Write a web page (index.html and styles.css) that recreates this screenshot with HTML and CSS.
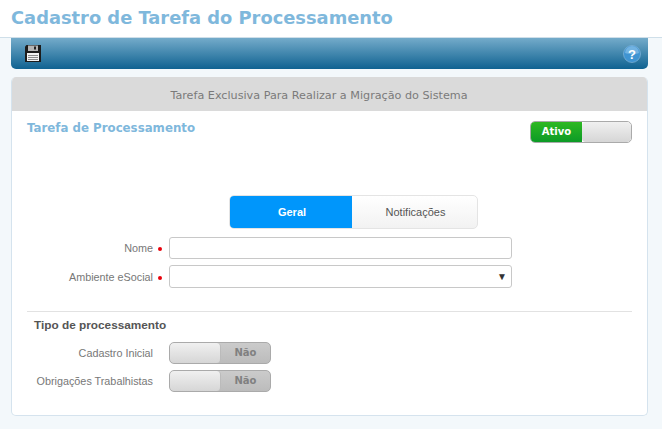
FILE: index.html
```html
<!DOCTYPE html>
<html lang="en">
<head>
    <meta charset="UTF-8">
    <meta name="viewport" content="width=device-width, initial-scale=1.0">
    <title>Cadastro de Tarefa do Processamento</title>
    <link rel="stylesheet" href="styles.css">
</head>
<body>
    <header class="header">
        <h1>Cadastro de Tarefa do Processamento</h1>
    </header>

    <div class="toolbar">
        <svg class="icon-save" width="16" height="18" viewBox="0 0 16 18">
            <path d="M0 1.5 1.5 0H16V17H0Z" fill="#1c1c1c"/>
            <rect x="3" y="0.5" width="10" height="5.5" fill="#b5b5b5"/>
            <rect x="9" y="1.5" width="2" height="3" fill="#222"/>
            <rect x="2" y="8" width="12" height="8" fill="#f2f2f2"/>
            <path d="M3 10.5H13M3 12.5H13M3 14.5H13" stroke="#8a8a8a" stroke-width="1"/>
        </svg>
        <svg class="icon-help" width="18" height="18" viewBox="0 0 18 18">
            <circle cx="9" cy="9" r="8.5" fill="#3f94d2" stroke="#8fbcdd" stroke-width="0.6"/>
            <path d="M2 8a7 7 0 0 1 14 0c-3 1.5-10 1.5-14 0Z" fill="#72b3e2"/>
            <text x="9" y="13.5" class="help-mark">?</text>
        </svg>
    </div>

    <main class="panel">
        <div class="panel-title">Tarefa Exclusiva Para Realizar a Migração do Sistema</div>

        <div class="panel-top">
            <h2>Tarefa de Processamento</h2>
            <div class="switch switch-on">
                <span class="switch-label">Ativo</span>
                <span class="switch-knob"></span>
            </div>
        </div>

        <div class="tabs">
            <div class="tab tab-active">Geral</div>
            <div class="tab tab-idle">Notificações</div>
        </div>

        <form class="form">
            <div class="row">
                <label class="req" for="nome">Nome</label>
                <input type="text" id="nome" class="field">
            </div>
            <div class="row">
                <label class="req" for="ambiente">Ambiente eSocial</label>
                <div class="field field-select" id="ambiente"><span class="arrow">▼</span></div>
            </div>
        </form>

        <section class="tipo">
            <h3>Tipo de processamento</h3>
            <div class="row row-switch">
                <span class="label">Cadastro Inicial</span>
                <div class="switch switch-off">
                    <span class="switch-knob"></span>
                    <span class="switch-label">Não</span>
                </div>
            </div>
            <div class="row row-switch">
                <span class="label">Obrigações Trabalhistas</span>
                <div class="switch switch-off">
                    <span class="switch-knob"></span>
                    <span class="switch-label">Não</span>
                </div>
            </div>
        </section>
    </main>
</body>
</html>
```

FILE: styles.css
```css
* { box-sizing: border-box; }
html, body { height: 100%; }
body { margin: 0; background-color: #f3f8fb; font-family: "Liberation Sans", Arial, sans-serif; font-size: 10.8px; color: #777; overflow: hidden; }

.header { height: 38px; background-color: #fff; border-bottom: 1px solid #cfdfe9; padding: 6px 11px 0; }
.header h1 { margin: 0; font: bold 17.85px/24px "DejaVu Sans", Verdana, sans-serif; color: #7fb8dc; }

.toolbar { height: 31px; margin: 0 14px 0 11px; border-radius: 0 0 5px 5px; background: linear-gradient(#74abca, #0f6291); display: flex; align-items: center; justify-content: space-between; padding: 0 7px 0 14px; }
.icon-save { display: block; }
.icon-help { display: block; }
.help-mark { font: bold 13px "Liberation Sans", sans-serif; fill: #fff; text-anchor: middle; }

.panel { height: 339px; margin: 8px 14px 0 11px; background-color: #fff; border: 1px solid #d5e3ee; border-top: 0; border-radius: 5px; overflow: hidden; }
.panel-title { height: 34px; padding-right: 21px; background-color: #dadada; font: 11.2px/37px "DejaVu Sans", Verdana, sans-serif; color: #7a7a7a; text-align: center; }

.panel-top { display: flex; justify-content: space-between; padding: 9px 15px 0 15px; height: 84px; }
.panel-top h2 { margin: 0; font: bold 11.8px/16px "DejaVu Sans", Verdana, sans-serif; color: #7fb8dc; }
.panel-top .switch { margin-top: 1px; }

.switch { display: flex; width: 102px; height: 22px; border: 1px solid #aaa; border-radius: 5px; overflow: hidden; font: bold 10px/20px "DejaVu Sans", Verdana, sans-serif; }
.switch-label { width: 51px; text-align: center; }
.switch-knob { flex: 1; background: linear-gradient(#f0f0f0, #d6d6d6); border-radius: 4px; }
.switch-on .switch-label { background: linear-gradient(#2eb822, #0c9a26); color: #fff; }
.switch-off { background: linear-gradient(#cbcbcb, #bcbcbc); color: #808080; }
.switch-off .switch-knob { flex: none; width: 51px; border-right: 1px solid #bbb; }
.switch-off .switch-label { flex: 1; }

.tabs { display: flex; width: 249px; height: 34px; margin-left: 217px; border: 1px solid #e4e4e4; border-radius: 5px; background: linear-gradient(#fff, #f2f2f2); overflow: hidden; }
.tab { width: 123px; font-size: 11px; line-height: 33px; text-align: center; color: #555; }
.tab-idle { padding-left: 4px; }
.tab-active { width: 122px; padding-left: 2px; background-color: #0096fb; color: #fff; font-weight: bold; }

.form { margin-top: 8px; }
.row { display: flex; align-items: center; height: 22px; margin-bottom: 6px; }
.row:last-child { margin-bottom: 0; }
.row:nth-child(2) { height: 23px; }
.row label { width: 141px; margin-right: 16px; text-align: right; color: #777; }
.req { position: relative; }
.req::after { content: ""; position: absolute; right: -9px; top: 5px; width: 4px; height: 4px; border-radius: 50%; background-color: #e8000b; }
.field { display: block; width: 343px; height: 100%; margin: 0; padding: 0 4px; border: 1px solid #c8c8c8; border-radius: 3px; background: #fff; }
.field-select { display: flex; align-items: center; justify-content: flex-end; }
.arrow { font-size: 10px; color: #333; }

.tipo { margin: 23px 15px 0; border-top: 1px solid #e2e2e2; }
.tipo h3 { margin: 0; padding: 5px 0 0 7px; font-size: 11.8px; line-height: 16px; font-weight: bold; color: #555; }
.row-switch { height: 22px; margin-bottom: 0; }
.tipo h3 + .row-switch { margin-top: 8px; }
.row-switch + .row-switch { margin-top: 6px; height: 22px; }
.row-switch .label { width: 126px; margin-right: 16px; text-align: right; white-space: nowrap; }
```
